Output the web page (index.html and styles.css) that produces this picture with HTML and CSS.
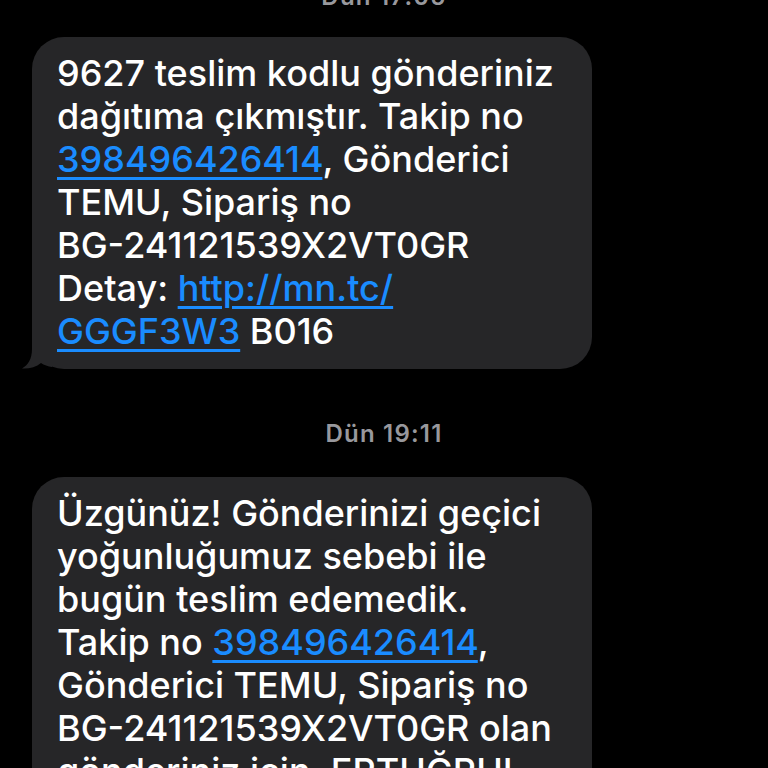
FILE: index.html
```html
<!DOCTYPE html>
<html lang="tr">
<head>
<meta charset="utf-8">
<link rel="stylesheet" href="styles.css">
</head>
<body>
<div class="thread">
  <div class="stamp stamp-first">Dün 17:05</div>
  <div class="bubble">
    <p class="msg">9627 teslim kodlu gönderiniz<br>dağıtıma çıkmıştır. Takip no<br><a class="link" href="#">398496426414</a>, Gönderici<br>TEMU, Sipariş no<br>BG-241121539X2VT0GR<br>Detay: <a class="link" href="#">http://mn.tc/<br>GGGF3W3</a> B016</p>
    <svg class="tail" width="30" height="34" viewBox="0 0 30 34" aria-hidden="true"><path d="M10 0 L10 14 C10 24 6 30 0 33.5 C7 34 14 32 19 28 C22 30 26 31.5 30 32 L30 0 Z"/></svg>
  </div>
  <div class="stamp">Dün 19:11</div>
  <div class="bubble">
    <p class="msg">Üzgünüz! Gönderinizi geçici<br>yoğunluğumuz sebebi ile<br>bugün teslim edemedik.<br>Takip no <a class="link" href="#">398496426414</a>,<br>Gönderici TEMU, Sipariş no<br>BG-241121539X2VT0GR olan<br>gönderiniz için, ERTUĞRUL<br>Kargo ile iletişime geçiniz.</p>
  </div>
</div>
</body>
</html>
```
FILE: styles.css
```css
html, body {
  margin: 0;
  padding: 0;
  background: #000;
  height: 768px;
  overflow: hidden;
}
.thread {
  display: flex;
  flex-direction: column;
  align-items: flex-start;
  font-family: Inter, "Liberation Sans", sans-serif;
}
.stamp {
  align-self: stretch;
  text-align: center;
  color: #98989d;
  font-size: 24px;
  font-weight: 600;
  letter-spacing: 1.2px;
  line-height: 26px;
  margin: 52px 0 30px;
}
.stamp-first {
  margin: -16px 0 27px;
}
.bubble {
  position: relative;
  margin-left: 32px;
  width: 560px;
  box-sizing: border-box;
  padding: 15px 20px 16px 25px;
  background: #262628;
  border-radius: 32px;
}
.msg {
  margin: 0;
  color: #fff;
  font-size: 36px;
  font-weight: 500;
  line-height: 43px;
  white-space: nowrap;
}
.link {
  color: #1a8cff;
  text-decoration: underline;
  text-decoration-thickness: 3px;
  text-underline-offset: 5px;
}
.tail {
  position: absolute;
  left: -10px;
  bottom: 0;
  fill: #262628;
}
```
